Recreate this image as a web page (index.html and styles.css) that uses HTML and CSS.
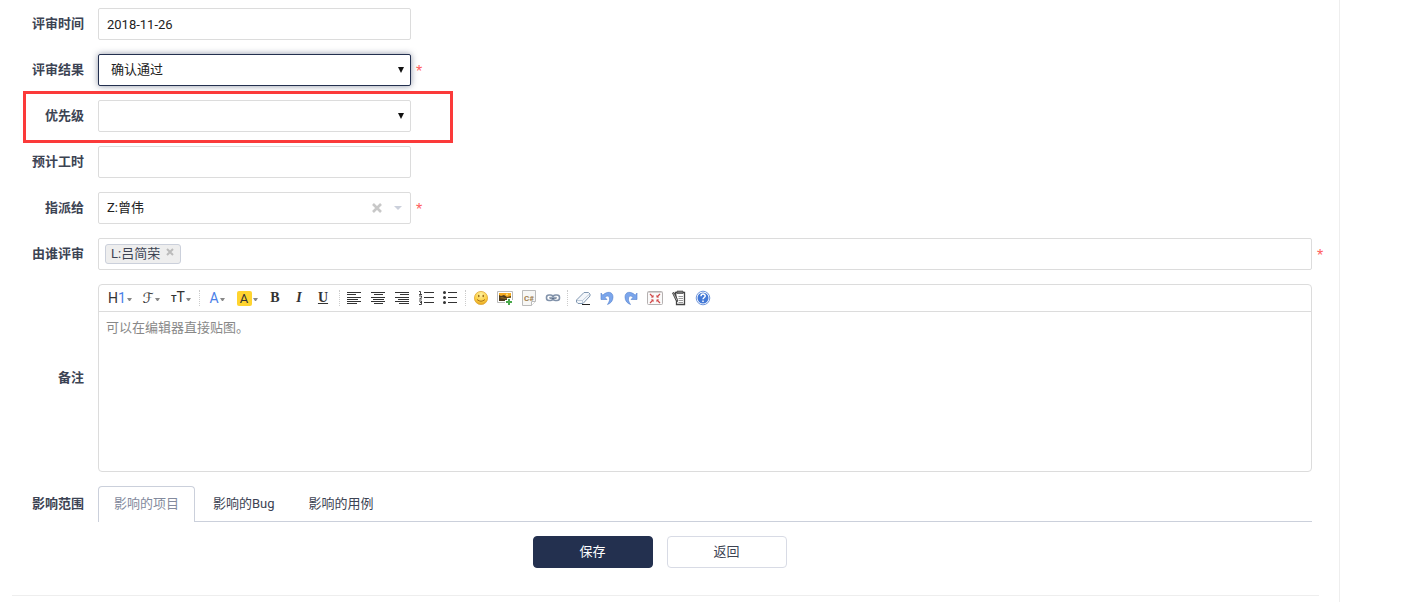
FILE: index.html
```html
<!DOCTYPE html>
<html lang="zh-CN">
<head>
    <meta charset="UTF-8">
    <meta name="viewport" content="width=device-width, initial-scale=1.0">
    <title>评审</title>
    <link rel="stylesheet" href="styles.css">
</head>
<body>
    <main class="main">
        <form class="review-form">
            <div class="row row-short">
                <label class="label" for="reviewedDate">评审时间</label>
                <input class="control" type="text" id="reviewedDate" value="2018-11-26">
            </div>
            <div class="row row-short">
                <label class="label" for="result">评审结果</label>
                <div class="select-box">
                    <select class="control active" id="result">
                        <option>确认通过</option>
                    </select>
                    <svg class="arrow" width="6" height="6" viewBox="0 0 6 6"><path d="M0 0h6L3 6z" fill="#111"/></svg>
                </div>
                <span class="required">*</span>
            </div>
            <div class="row row-short marked">
                <label class="label" for="pri">优先级</label>
                <div class="select-box">
                    <select class="control" id="pri">
                        <option></option>
                    </select>
                    <svg class="arrow" width="6" height="6" viewBox="0 0 6 6"><path d="M0 0h6L3 6z" fill="#111"/></svg>
                </div>
            </div>
            <div class="row row-short">
                <label class="label" for="estimate">预计工时</label>
                <input class="control" type="text" id="estimate">
            </div>
            <div class="row row-short">
                <label class="label" for="assignedTo">指派给</label>
                <div class="control chosen">
                    <input class="chosen-input" type="text" id="assignedTo" value="Z:曾伟">
                    <button class="plain" type="button" aria-label="清除">
                        <svg width="10" height="10" viewBox="0 0 10 10"><path d="M1 1l8 8M9 1L1 9" stroke="#c8c8c8" stroke-width="2.6"/></svg>
                    </button>
                    <button class="plain" type="button" aria-label="展开">
                        <svg width="8" height="4" viewBox="0 0 8 4"><path d="M0 0h8L4 4z" fill="#cbd0db"/></svg>
                    </button>
                </div>
                <span class="required">*</span>
            </div>
            <div class="row">
                <label class="label" for="reviewedBy">由谁评审</label>
                <div class="control chosen multi">
                    <span class="tag">L:吕简荣
                        <button class="plain" type="button" aria-label="移除">
                            <svg width="8" height="8" viewBox="0 0 8 8"><path d="M1 1l6 6M7 1L1 7" stroke="#bbb" stroke-width="2"/></svg>
                        </button>
                    </span>
                    <input class="chosen-input" type="text" id="reviewedBy">
                </div>
                <span class="required">*</span>
            </div>
            <div class="row">
                <label class="label" for="comment">备注</label>
                <div class="editor">
                    <div class="toolbar">
                        <button class="tool pick-heading" type="button" aria-label="段落"><span>H<i class="blue">1</i></span><svg class="caret" width="5" height="4" viewBox="0 0 5 4"><path d="M0 0h5L3 3H2z"/></svg></button>
                        <button class="tool pick-font" type="button" aria-label="字体"><span class="script">ℱ</span><svg class="caret" width="5" height="4" viewBox="0 0 5 4"><path d="M0 0h5L3 3H2z"/></svg></button>
                        <button class="tool pick-size" type="button" aria-label="文字大小"><span><small>T</small>T</span><svg class="caret" width="5" height="4" viewBox="0 0 5 4"><path d="M0 0h5L3 3H2z"/></svg></button>
                        <span class="sep"></span>
                        <button class="tool pick-color" type="button" aria-label="文字颜色"><span class="blue">A</span><svg class="caret" width="5" height="4" viewBox="0 0 5 4"><path d="M0 0h5L3 3H2z"/></svg></button>
                        <button class="tool pick-back" type="button" aria-label="文字背景"><span class="swatch">A</span><svg class="caret" width="5" height="4" viewBox="0 0 5 4"><path d="M0 0h5L3 3H2z"/></svg></button>
                        <div class="marks">
                            <button class="tool" type="button" aria-label="粗体"><b>B</b></button>
                            <button class="tool" type="button" aria-label="斜体"><b class="italic">I</b></button>
                            <button class="tool" type="button" aria-label="下划线"><b class="underline">U</b></button>
                        </div>
                        <span class="sep"></span>
                        <button class="tool" type="button" aria-label="左对齐">
                            <svg width="16" height="16" viewBox="0 0 16 16"><path d="M0 2.5h14M0 4.5h9M0 7.5h14M0 9.500h11M0 11.500h14M0 13.500h10" stroke="#333"/></svg>
                        </button>
                        <button class="tool" type="button" aria-label="居中">
                            <svg width="16" height="16" viewBox="0 0 16 16"><path d="M0 2.500h14M3 4.500h9M0 7.500h14M2 9.500h11M0 11.500h14M3 13.500h9" stroke="#333"/></svg>
                        </button>
                        <button class="tool" type="button" aria-label="右对齐">
                            <svg width="16" height="16" viewBox="0 0 16 16"><path d="M0 2.500h14M5 4.500h9M0 7.500h14M3 9.500h11M0 11.500h14M4 13.500h10" stroke="#333"/></svg>
                        </button>
                        <button class="tool" type="button" aria-label="编号">
                            <svg width="16" height="16" viewBox="0 0 16 16" fill="none" stroke="#333"><path d="M5 2.500h10M5 7.500h10M5 12.500h10"/><path d="M0 1.500h1.500v3M0 4.500h3M0 6h2.500v1.500L.5 9H3M0 11h2.500v3.500H0M1 12.500h2" stroke-width=".9"/></svg>
                        </button>
                        <button class="tool" type="button" aria-label="项目符号">
                            <svg width="16" height="16" viewBox="0 0 16 16"><path d="M5 2.500h9M5 7.500h9M5 12.500h9" stroke="#333"/><g fill="#333"><circle cx="1.500" cy="2.500" r="1.500"/><circle cx="1.500" cy="7.500" r="1.500"/><circle cx="1.500" cy="12.500" r="1.500"/></g></svg>
                        </button>
                        <span class="sep"></span>
                        <button class="tool" type="button" aria-label="插入表情">
                            <svg width="16" height="16" viewBox="0 0 16 16"><defs><radialGradient id="face" cx=".5" cy=".25" r=".8"><stop offset="0" stop-color="#fff2a0"/><stop offset=".65" stop-color="#fbcb3b"/><stop offset="1" stop-color="#dc981a"/></radialGradient></defs><circle cx="8" cy="8" r="6.600" fill="url(#face)" stroke="#e0aa3c" stroke-width=".8"/><ellipse cx="5.800" cy="6" rx=".7" ry="1.200" fill="#8a5a11"/><ellipse cx="10.200" cy="6" rx=".7" ry="1.200" fill="#8a5a11"/><path d="M4 9.500q4 3.500 8 0" fill="none" stroke="#9d6717" stroke-width=".9"/></svg>
                        </button>
                        <button class="tool" type="button" aria-label="图片">
                            <svg width="16" height="16" viewBox="0 0 16 16"><path d="M.5 1.500h15v11H.5z" fill="#fff" stroke="#bbb"/><path d="M2 3h12v8H2z" fill="#4b391d"/><path d="M2 3h12v3L10 7 7 5 4 6 2 5z" fill="#f5ab20"/><path d="M2 8l3-1 3 1 6-1v1l-6 1-6-1z" fill="#8d681e"/><circle cx="10" cy="4.600" r="1" fill="#ffe483"/><path d="M12 8v8M8 12h8" stroke="#fff" stroke-width="4"/><path d="M12 9v6M9 12h6" stroke="#49a84b" stroke-width="2"/></svg>
                        </button>
                        <button class="tool" type="button" aria-label="插入代码">
                            <svg width="16" height="16" viewBox="0 0 16 16"><path d="M1.500.5h13v11l-4 4h-9z" fill="#f7f7f5" stroke="#bbb"/><path d="M10.500 15.500v-4h4" fill="#fff" stroke="#bbb"/><text class="code-mark" x="3" y="11">C#</text></svg>
                        </button>
                        <button class="tool" type="button" aria-label="超级链接">
                            <svg width="16" height="16" viewBox="0 0 16 16" fill="none"><rect x="1.500" y="5" width="6.500" height="5.500" rx="2.500" stroke="#8192aa" stroke-width="1.600"/><rect x="8" y="5" width="6.500" height="5.500" rx="2.500" stroke="#8192aa" stroke-width="1.600"/><path d="M4.500 7.800h7" stroke="#52657e" stroke-width="1.800"/><path d="M5 7.300h6" stroke="#cbd6e5" stroke-width=".7"/></svg>
                        </button>
                        <span class="sep"></span>
                        <button class="tool" type="button" aria-label="删除格式">
                            <svg width="16" height="16" viewBox="0 0 16 16"><path d="M9 2.500h4.500L15 4v2l-7 7.500H3L1.500 12v-2z" fill="#f4f7fb" stroke="#8097b1"/><path d="M2 10.500h5.500L14.500 4M7.500 10.500V13" fill="none" stroke="#a9bacd" stroke-width=".7"/><path d="M7 14.500h8" stroke="#222"/></svg>
                        </button>
                        <button class="tool" type="button" aria-label="后退">
                            <svg width="16" height="16" viewBox="0 0 16 16"><path d="M2 3l1.800 2.200C8 .8 14 1.500 14 7c0 4-2.500 6.500-5.500 7.500C10.500 11.500 11 9.500 10.300 7.600 9.500 5.500 7.700 5.800 6 7.400L8 9.500H2z" fill="#7ba6ec" stroke="#5682cd" stroke-width=".6"/></svg>
                        </button>
                        <button class="tool" type="button" aria-label="前进">
                            <svg width="16" height="16" viewBox="0 0 16 16"><path d="M14 3l-1.800 2.200C8 .8 2 1.500 2 7c0 4 2.500 6.500 5.500 7.500C5.500 11.500 5 9.500 5.700 7.600 6.500 5.500 8.300 5.800 10 7.400L8 9.500h6z" fill="#7ba6ec" stroke="#5682cd" stroke-width=".6"/></svg>
                        </button>
                        <button class="tool" type="button" aria-label="全屏显示">
                            <svg width="16" height="16" viewBox="0 0 16 16"><rect x=".5" y="1.500" width="15" height="13" rx="1" fill="#fafafa" stroke="#b5b1b1"/><path d="M1 2.500h14" stroke="#d5d0d0"/><path d="M3 4l3 3M13 4l-3 3M3 13l3-3M13 13l-3-3" stroke="#d24a4a" stroke-width="1.200"/><path d="M6.500 4.800v2.700H3.800zM9.500 4.800v2.700h2.700zM6.500 12.200V9.500H3.800zM9.500 12.200V9.500h2.700z" fill="#d24a4a"/></svg>
                        </button>
                        <button class="tool" type="button" aria-label="源代码">
                            <svg width="16" height="16" viewBox="0 0 16 16"><path d="M4.500 2.500h9v12h-8v-3z" fill="#fff" stroke="#444" stroke-width="1.300"/><path d="M6 1h6v2.500H6z" fill="#777" stroke="#444" stroke-width=".6"/><path d="M7.500 6.500H12M7.500 8.500H12M7.500 10.500H12M7.500 12.500H12" stroke="#999"/><path d="M1.500 3l1.500-.5 3.500 7v2L5 10.500z" fill="#aaa" stroke="#333" stroke-width=".8"/></svg>
                        </button>
                        <button class="tool" type="button" aria-label="使用帮助">
                            <svg width="16" height="16" viewBox="0 0 16 16"><circle cx="8" cy="8" r="6.800" fill="#fff" stroke="#6f96dc"/><circle cx="8" cy="8" r="5.500" fill="#4479d6"/><path d="M6 6.300c0-3 4.200-2.800 4.200-.3C10.200 7.500 8 7.500 8 9.300M8 10.400v1.500" fill="none" stroke="#fff" stroke-width="1.500"/></svg>
                        </button>
                    </div>
                    <textarea class="editor-text" id="comment" placeholder="可以在编辑器直接贴图。"></textarea>
                </div>
            </div>
            <div class="row">
                <span class="label">影响范围</span>
                <nav class="tabs">
                    <a class="tab current" href="#projects">影响的项目</a>
                    <a class="tab" href="#bugs">影响的Bug</a>
                    <a class="tab" href="#cases">影响的用例</a>
                </nav>
            </div>
            <div class="actions">
                <button class="btn primary" type="submit">保存</button>
                <button class="btn" type="button">返回</button>
            </div>
        </form>
        <hr class="divider">
    </main>
</body>
</html>
```
FILE: styles.css
```css
*,
*::after {
    box-sizing: border-box;
}

body {
    margin: 0;
    background: #fff;
    color: #3c4353;
    font-family: Roboto, "Noto Sans CJK SC", sans-serif;
    font-size: 13px;
    line-height: 20px;
}

input,
select,
textarea,
button {
    font: inherit;
    color: inherit;
}

.main {
    min-height: 100vh;
    margin-right: 61px;
    padding-top: 8px;
    border-right: 1px solid #eee;
}

/* Form rows */
.review-form {
    display: flex;
    flex-direction: column;
    gap: 14px;
}

.row {
    position: relative;
    display: grid;
    grid-template-columns: 86px 1fr 12px;
    align-items: center;
    padding: 0 15px 0 12px;
}

.row-short {
    grid-template-columns: 86px 313px 12px;
}

.label {
    padding-right: 14px;
    font-weight: bold;
    text-align: right;
    white-space: nowrap;
}

.control {
    height: 32px;
    padding: 5px 8px;
    border: 1px solid #dcdcdc;
    border-radius: 2px;
    background: #fff;
    color: #222;
    outline: none;
}

.required {
    padding: 4px 0 0 5px;
    color: #ff5d5d;
    font-family: "Liberation Sans", sans-serif;
    font-size: 16px;
}

/* Priority highlight */
.marked::after {
    content: "";
    position: absolute;
    z-index: 1;
    top: -9px;
    left: 23px;
    width: 430px;
    height: 52px;
    border: 3px solid #fb3a3a;
    pointer-events: none;
}

/* Selects */
.select-box {
    position: relative;
}

.select-box .control {
    display: block;
    width: 100%;
    padding: 5px 12px;
    appearance: none;
}

.select-box .active {
    border-color: #23304f;
    box-shadow: 0 0 6px rgba(35, 48, 79, 0.5);
}

.arrow {
    position: absolute;
    top: 13px;
    right: 7px;
    pointer-events: none;
}

.chosen {
    display: flex;
    align-items: center;
    gap: 12px;
}

.chosen-input {
    flex: 1;
    min-width: 0;
    padding: 0;
    border: 0;
    background: none;
    outline: none;
}

.plain {
    display: flex;
    padding: 0;
    border: 0;
    background: none;
    cursor: pointer;
}

.multi {
    padding: 0 6px;
}

.tag {
    display: flex;
    gap: 6px;
    height: 20px;
    padding: 0 6px 0 5px;
    border: 1px solid #cbd0db;
    border-radius: 3px;
    background: #eee;
    color: #3c4353;
    line-height: 18px;
}

.tag .plain {
    align-self: flex-start;
    padding-top: 3px;
}

/* Editor */
.editor {
    border: 1px solid #dcdcdc;
    border-radius: 4px;
}

.toolbar {
    display: flex;
    align-items: center;
    height: 27px;
    padding-left: 4px;
    border-bottom: 1px solid #dcdcdc;
}

.tool {
    display: flex;
    align-items: center;
    justify-content: center;
    gap: 1px;
    width: 24px;
    height: 24px;
    padding: 0;
    border: 0;
    background: none;
    color: #333;
    cursor: pointer;
}

.tool i {
    font-style: normal;
}

.tool small {
    font-size: 9px;
    font-weight: bold;
}

.tool b {
    font-family: "Liberation Serif", serif;
    font-size: 14px;
}

.tool .italic {
    font-style: italic;
}

.tool .underline {
    text-decoration: underline;
}

.tool .blue {
    color: #4a80e8;
}

.script {
    font-family: "DejaVu Sans", sans-serif;
    font-size: 14px;
}

.swatch {
    width: 15px;
    height: 15px;
    border-radius: 2px;
    background: #ffd42f;
    line-height: 15px;
}

.caret {
    flex: none;
    margin-top: 3px;
    fill: #888;
}

.pick-heading,
.pick-font,
.pick-size,
.pick-color {
    font-size: 14px;
}

.pick-heading {
    width: 34px;
}

.pick-font {
    width: 28px;
}

.pick-size {
    width: 32px;
}

.pick-color {
    width: 28px;
}

.pick-back {
    width: 32px;
}

.marks {
    display: flex;
    padding-right: 2px;
}

.sep {
    height: 16px;
    margin: 0 3px 0 2px;
    border-left: 1px dotted #ccc;
}

.code-mark {
    fill: #a08050;
    font-size: 8px;
    font-weight: bold;
}

.editor-text {
    display: block;
    width: 100%;
    height: 159px;
    padding: 6px 7px;
    border: 0;
    background: none;
    outline: none;
    resize: none;
}

.editor-text::placeholder {
    color: #888;
}

/* Tabs */
.tabs {
    display: flex;
    gap: 2px;
    border-bottom: 1px solid #cbd0db;
}

.tab {
    margin-bottom: -1px;
    padding: 7px 15px 8px;
    border: 1px solid transparent;
    border-bottom: 0;
    border-radius: 4px 4px 0 0;
    color: #3c4353;
    text-decoration: none;
}

.tab.current {
    border-color: #cbd0db;
    background: #fff;
    color: #838a9d;
}

/* Buttons */
.actions {
    display: flex;
    justify-content: center;
    gap: 14px;
    padding-right: 20px;
}

.btn {
    width: 120px;
    height: 32px;
    padding: 0;
    border: 1px solid #d8dbe5;
    border-radius: 4px;
    background: #fff;
    cursor: pointer;
}

.btn.primary {
    border-color: #23304f;
    background: #23304f;
    color: #fff;
}

.divider {
    margin: 27px 20px 0 12px;
    border: 0;
    border-top: 1px solid #eee;
}
```
